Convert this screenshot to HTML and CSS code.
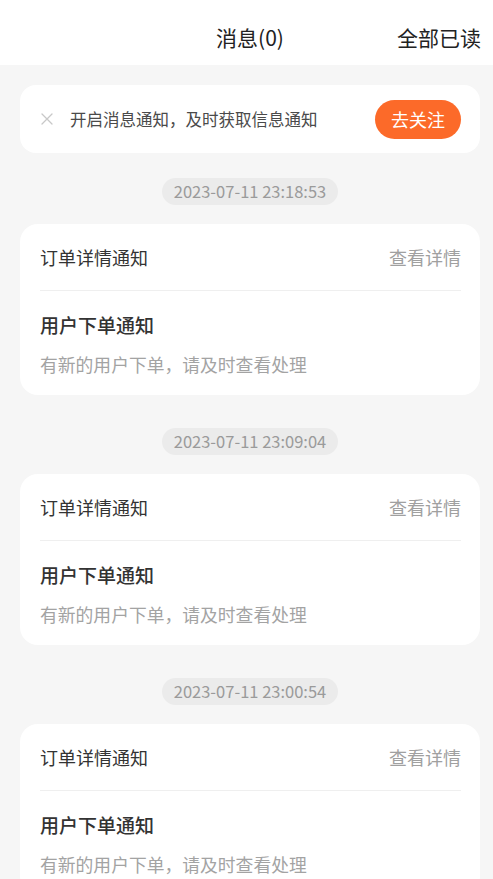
FILE: index.html
```html
<!DOCTYPE html>
<html lang="zh-CN">
<head>
<meta charset="utf-8">
<title>消息</title>
<link rel="stylesheet" href="styles.css">
</head>
<body>
<header class="topbar">
  <span class="topbar-side"></span>
  <h1 class="topbar-title">消息(0)</h1>
  <span class="topbar-action">全部已读</span>
</header>
<main class="content">
  <section class="notice">
    <svg class="notice-close" viewBox="0 0 12 12" width="12" height="12"><path d="M1 1 L11 11 M11 1 L1 11" stroke="#c8c8c8" stroke-width="1.3" fill="none" stroke-linecap="round"/></svg>
    <span class="notice-text">开启消息通知，及时获取信息通知</span>
    <button class="notice-btn">去关注</button>
  </section>

  <div class="group">
    <div class="stamp">2023-07-11 23:18:53</div>
    <article class="card">
      <div class="card-head"><span class="card-type">订单详情通知</span><span class="card-link">查看详情</span></div>
      <div class="card-body">
        <div class="card-title">用户下单通知</div>
        <div class="card-desc">有新的用户下单，请及时查看处理</div>
      </div>
    </article>
  </div>

  <div class="group">
    <div class="stamp">2023-07-11 23:09:04</div>
    <article class="card">
      <div class="card-head"><span class="card-type">订单详情通知</span><span class="card-link">查看详情</span></div>
      <div class="card-body">
        <div class="card-title">用户下单通知</div>
        <div class="card-desc">有新的用户下单，请及时查看处理</div>
      </div>
    </article>
  </div>

  <div class="group">
    <div class="stamp">2023-07-11 23:00:54</div>
    <article class="card">
      <div class="card-head"><span class="card-type">订单详情通知</span><span class="card-link">查看详情</span></div>
      <div class="card-body">
        <div class="card-title">用户下单通知</div>
        <div class="card-desc">有新的用户下单，请及时查看处理</div>
      </div>
    </article>
  </div>
</main>
</body>
</html>
```
FILE: styles.css
```css
html, body {
  margin: 0;
  padding: 0;
}
body {
  background: #f6f6f6;
  font-family: "Noto Sans CJK SC", "Noto Sans", sans-serif;
  color: #333;
  overflow: hidden;
}
.topbar {
  height: 65px;
  box-sizing: border-box;
  background: #fff;
  display: grid;
  grid-template-columns: 1fr auto 1fr;
  align-items: center;
  padding: 9px 12px 0 19px;
}
.topbar-title {
  margin: 0;
  font-size: 21px;
  font-weight: 400;
  color: #222;
  line-height: 28px;
}
.topbar-action {
  justify-self: end;
  font-size: 21px;
  color: #222;
  line-height: 28px;
}
.content {
  padding: 20px 13px 0 20px;
}
.notice {
  height: 68px;
  box-sizing: border-box;
  background: #fff;
  border-radius: 16px;
  display: flex;
  align-items: center;
  padding: 0 19px 0 21px;
}
.notice-close {
  flex: none;
  margin-right: 17px;
}
.notice-text {
  flex: 1;
  font-size: 16.5px;
  color: #4a4a4a;
}
.notice-btn {
  border: 0;
  background: #fc6a29;
  color: #fff;
  font-family: inherit;
  font-size: 18px;
  height: 39px;
  width: 86px;
  border-radius: 20px;
  padding: 0;
}
.group {
  display: flex;
  flex-direction: column;
  align-items: center;
  padding-top: 33px;
}
.group:first-of-type {
  padding-top: 25px;
}
.stamp {
  height: 27px;
  line-height: 27px;
  padding: 0 12px;
  border-radius: 14px;
  background: #ebebeb;
  color: #9a9a9a;
  font-size: 16.5px;
  margin-bottom: 19px;
}
.card {
  align-self: stretch;
  background: #fff;
  border-radius: 18px;
  padding: 0 19px 0 20px;
}
.card-head {
  height: 66px;
  display: flex;
  align-items: center;
  justify-content: space-between;
  border-bottom: 1px solid #efefef;
}
.card-type {
  font-size: 18px;
  color: #333;
}
.card-link {
  font-size: 18px;
  color: #a0a0a0;
}
.card-body {
  padding: 21px 0 19px;
}
.card-title {
  font-size: 19px;
  line-height: 26px;
  font-weight: 500;
  color: #333;
}
.card-desc {
  margin-top: 14px;
  font-size: 17.8px;
  line-height: 24px;
  color: #a3a3a3;
}
```
